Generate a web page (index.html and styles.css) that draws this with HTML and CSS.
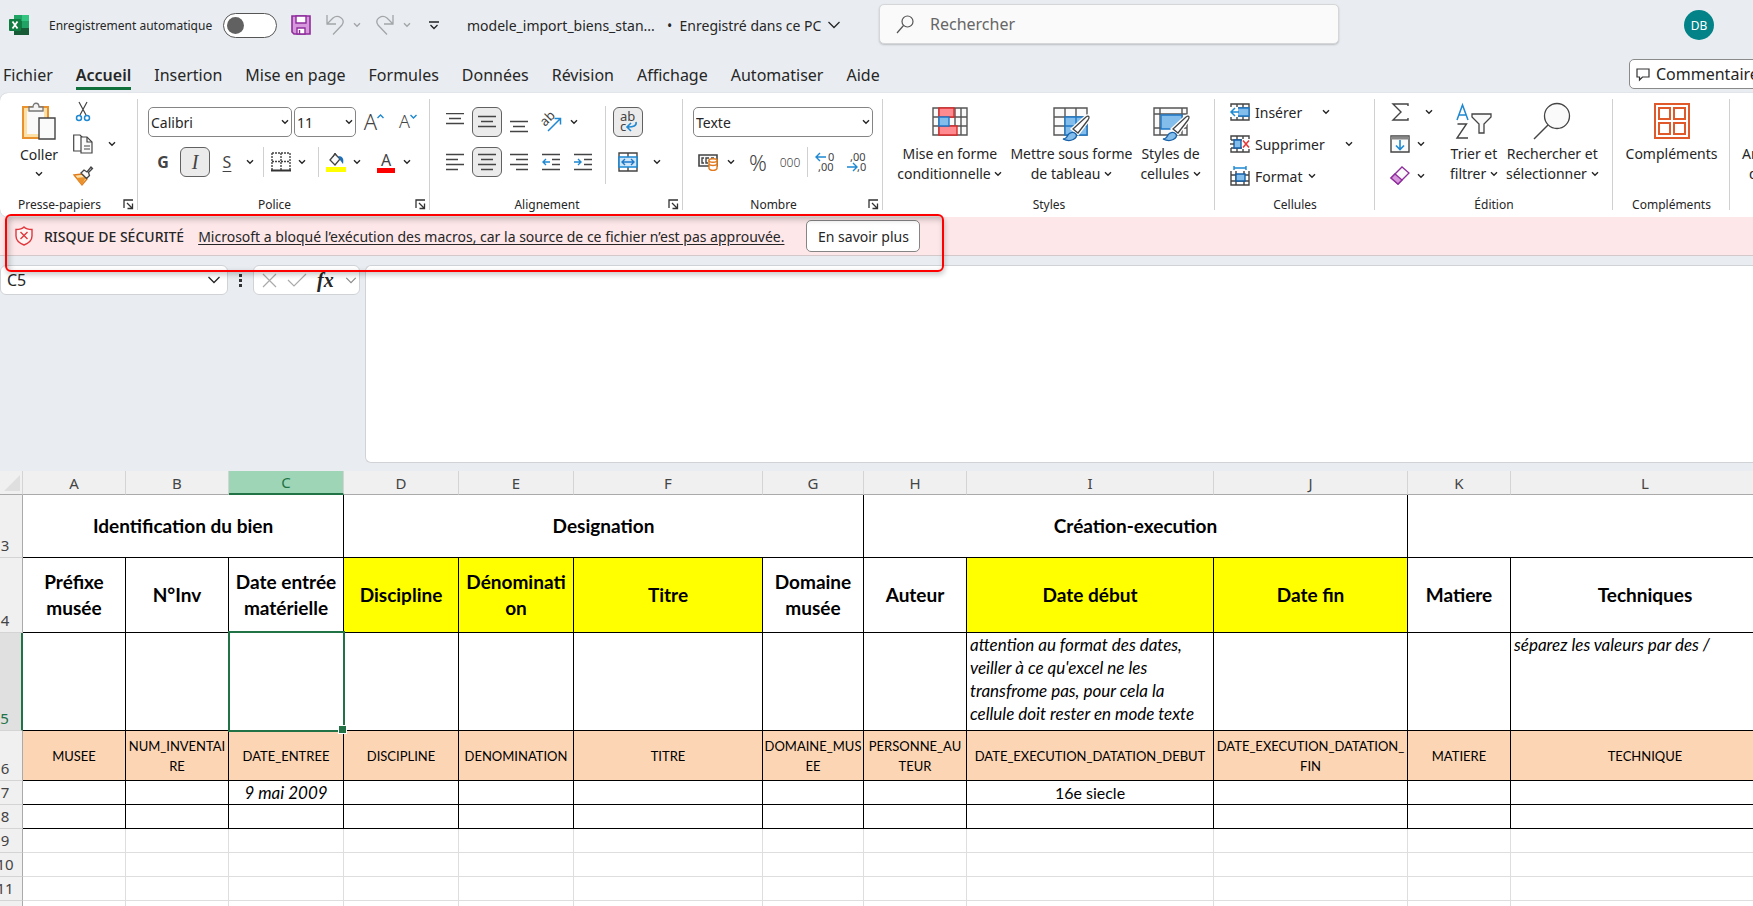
FILE: index.html
```html
<!DOCTYPE html>
<html lang="fr">
<head>
    <meta charset="UTF-8">
    <meta name="viewport" content="width=device-width, initial-scale=1.0">
    <title>modele_import_biens_standard - Excel</title>
    <link rel="stylesheet" href="styles.css">
</head>
<body>
    <svg class="sprite" aria-hidden="true">
        <symbol id="chev" viewBox="0 0 8 6"><path d="M1 1.2l3 3 3-3" fill="none" stroke="currentColor" stroke-width="1.4"/></symbol>
        <symbol id="chev-lg" viewBox="0 0 14 8"><path d="M1.500 1l5.500 5.500L12.500 1" fill="none" stroke="currentColor" stroke-width="1.300"/></symbol>
        <symbol id="launch" viewBox="0 0 11 11"><path d="M1 9V1h9M4 4l5 5M9.500 4.500v5h-5" fill="none" stroke="#333" stroke-width="1.300"/></symbol>
    </svg>

    <!-- Barre de titre -->
    <header class="title-bar">
        <div class="title-left">
            <svg class="logo" width="20" height="20" viewBox="0 0 20 20">
                <path d="M5 0h15v20H5z" fill="#21a366"/><path d="M13 0h7v6h-7z" fill="#33c481"/><path d="M5 6h8v7H5z" fill="#107c41"/><path d="M5 13h15v7H5z" fill="#185c37"/>
                <rect y="4" width="12" height="12" rx="1" fill="#107c41"/><path d="M3.500 6.500l5 7M8.500 6.500l-5 7" stroke="#fff" stroke-width="1.800"/>
            </svg>
            <label class="autosave">Enregistrement automatique <input type="checkbox" class="toggle"></label>
            <button class="qat save" aria-label="Enregistrer">
                <svg width="20" height="20" viewBox="0 0 20 20"><path d="M1 1h18v18H3l-2-2z" fill="#d697dc" stroke="#8f2c9c" stroke-width="1.600"/><path d="M5 1h10v7H5zM6 13h8v6H6z" fill="#fff" stroke="#8f2c9c" stroke-width="1.400"/><path d="M8.500 15v4" stroke="#8f2c9c" stroke-width="1.400"/></svg>
            </button>
            <button class="qat muted" aria-label="Annuler">
                <svg width="20" height="20" viewBox="0 0 20 20"><path d="M2 0v9h9M2 9l6-6c5-4 13 1 9 7l-9 9.500" fill="none" stroke="currentColor" stroke-width="1.300"/></svg>
            </button>
            <button class="qat drop muted" aria-label="Liste annuler"><svg class="chev"><use href="#chev"/></svg></button>
            <button class="qat muted" aria-label="Rétablir">
                <svg width="20" height="20" viewBox="0 0 20 20"><path d="M18 0v9H9M18 9l-6-6C7-1 -1 4 3 10l9 9.500" fill="none" stroke="currentColor" stroke-width="1.300"/></svg>
            </button>
            <button class="qat drop muted" aria-label="Liste rétablir"><svg class="chev"><use href="#chev"/></svg></button>
            <button class="qat custom" aria-label="Personnaliser">
                <svg width="10" height="9" viewBox="0 0 10 9"><path d="M0 1h10M1.500 4L5 7.500 8.500 4" fill="none" stroke="#222" stroke-width="1.300"/></svg>
            </button>
            <span class="doc-name">modele_import_biens_stan...</span>
            <button class="doc-state">• &nbsp;Enregistré dans ce PC <svg width="14" height="8"><use href="#chev-lg"/></svg></button>
        </div>
        <label class="search">
            <svg width="18" height="19" viewBox="0 0 18 19"><circle cx="11.500" cy="6.500" r="5.500" fill="none" stroke="#555" stroke-width="1.200"/><path d="M7.500 10.500L1 18" stroke="#555" stroke-width="1.200"/></svg>
            <input type="text" placeholder="Rechercher" aria-label="Rechercher">
        </label>
        <button class="avatar">DB</button>
    </header>

    <nav class="tabs">
        <a href="#">Fichier</a>
        <a href="#" class="active">Accueil</a>
        <a href="#">Insertion</a>
        <a href="#">Mise en page</a>
        <a href="#">Formules</a>
        <a href="#">Données</a>
        <a href="#">Révision</a>
        <a href="#">Affichage</a>
        <a href="#">Automatiser</a>
        <a href="#">Aide</a>
        <button class="comments">
            <svg width="14" height="13" viewBox="0 0 14 13"><path d="M1 1h12v8H6.500L3.500 12V9H1z" fill="none" stroke="#333" stroke-width="1.200"/></svg>
            Commentaires
        </button>
    </nav>

    <!-- Ruban -->
    <div class="ribbon">
        <section class="group clipboard">
            <div class="group-body">
                <button class="big">
                    <svg width="36" height="39" viewBox="0 0 36 39"><path d="M2 5h25v31H2z" fill="#fce0a6" stroke="#e8912d" stroke-width="2"/><path d="M6 9h17v23H6z" fill="#fafafa"/><path d="M8 9V5h4c0-5 6-5 6 0h4v4z" fill="#f4f4f4" stroke="#777" stroke-width="1.300"/><path d="M18 16h16v21H18z" fill="#fafafa" stroke="#444" stroke-width="1.400"/></svg>
                    <span>Coller</span>
                    <svg class="chev"><use href="#chev"/></svg>
                </button>
                <div class="stack">
                    <button class="row" aria-label="Couper"><svg width="20" height="20" viewBox="0 0 20 20"><path d="M6 0l7 13M14 0L7 13" stroke="#444" stroke-width="1.200"/><circle cx="6" cy="16" r="2.500" fill="none" stroke="#1e88d2" stroke-width="1.500"/><circle cx="14" cy="16" r="2.500" fill="none" stroke="#1e88d2" stroke-width="1.500"/></svg></button>
                    <button class="row" aria-label="Copier"><svg width="20" height="20" viewBox="0 0 20 20"><path d="M8 17H.7V1H7l3 3" fill="none" stroke="#444" stroke-width="1.200"/><path d="M8 3h6l5 5v11H8z" fill="#fafafa" stroke="#444" stroke-width="1.200"/><path d="M14 3v5h5M11 12h6M11 15h6" fill="none" stroke="#444" stroke-width="1.200"/></svg><svg class="chev far"><use href="#chev"/></svg></button>
                    <button class="row" aria-label="Reproduire la mise en forme"><svg width="20" height="20" viewBox="0 0 20 20"><path d="M1 9l8-1 5 5-5 6z" fill="#fce0a6" stroke="#e07a1c" stroke-width="1.300"/><path d="M3 12l10-1-4 8z" fill="#e8912d"/><path d="M8 7l3-3 3 2 4-5 1.500 1.500-4 4 1 3-3 3z" fill="#fafafa" stroke="#444" stroke-width="1.300"/></svg></button>
                </div>
            </div>
            <div class="group-label"><span>Presse-papiers</span><button aria-label="Options presse-papiers"><svg width="11" height="11"><use href="#launch"/></svg></button></div>
        </section>

        <section class="group font">
            <div class="group-body lines">
                <div class="line">
                    <span class="combo font-name"><select aria-label="Police"><option>Calibri</option></select><svg class="chev"><use href="#chev"/></svg></span>
                    <span class="combo font-size"><select aria-label="Taille de police"><option>11</option></select><svg class="chev"><use href="#chev"/></svg></span>
                    <button class="ico grow" aria-label="Augmenter la taille"><span>A</span><svg width="7" height="5" viewBox="0 0 7 5"><path d="M.5 4l3-3 3 3" fill="none" stroke="#1e88d2" stroke-width="1.400"/></svg></button>
                    <button class="ico grow less" aria-label="Diminuer la taille"><span>A</span><svg width="7" height="5" viewBox="0 0 7 5"><path d="M.5 1l3 3 3-3" fill="none" stroke="#1e88d2" stroke-width="1.400"/></svg></button>
                </div>
                <div class="line">
                    <button class="ico"><b>G</b></button>
                    <button class="ico on"><i>I</i></button>
                    <button class="ico"><u>S</u></button>
                    <button class="drop" aria-label="Soulignement"><svg class="chev"><use href="#chev"/></svg></button>
                    <span class="sep"></span>
                    <button class="ico slim" aria-label="Bordures"><svg width="20" height="20" viewBox="0 0 20 20"><path d="M1 1h18v17M1 1v17M10 1v17M1 9.500h18" fill="none" stroke="#444" stroke-width="1.400" stroke-dasharray="2 1"/><path d="M0 18.500h20" stroke="#333" stroke-width="2"/></svg></button>
                    <button class="drop mid" aria-label="Choix des bordures"><svg class="chev"><use href="#chev"/></svg></button>
                    <span class="sep"></span>
                    <button class="ico slim" aria-label="Couleur de remplissage"><svg width="20" height="20" viewBox="0 0 20 20"><path d="M4 8l5-6 5 5-5 6z" fill="#fafafa" stroke="#444" stroke-width="1.300"/><path d="M7 5l2-4 2 3" fill="none" stroke="#444"/><path d="M12 4c5 0 6 3 5 8l-3-4z" fill="#1e6fb8"/><path d="M0 15h20v5H0z" fill="#ff0"/></svg></button>
                    <button class="drop mid" aria-label="Choix du remplissage"><svg class="chev"><use href="#chev"/></svg></button>
                    <button class="ico slim colour" aria-label="Couleur de police"><span>A</span></button>
                    <button class="drop mid" aria-label="Choix de la couleur"><svg class="chev"><use href="#chev"/></svg></button>
                </div>
            </div>
            <div class="group-label"><span>Police</span><button aria-label="Options police"><svg width="11" height="11"><use href="#launch"/></svg></button></div>
        </section>

        <section class="group align">
            <div class="group-body">
                <div class="lines">
                    <div class="line">
                        <button class="ico" aria-label="Aligner en haut"><svg width="18" height="18" viewBox="0 0 18 18"><path d="M0 .7h18M3 5.500h12M0 10.500h18" stroke="#444" stroke-width="1.300"/></svg></button>
                        <button class="ico on" aria-label="Aligner au centre"><svg width="18" height="18" viewBox="0 0 18 18"><path d="M0 3.500h18M3 8.500h12M0 13.500h18" stroke="#444" stroke-width="1.300"/></svg></button>
                        <button class="ico" aria-label="Aligner en bas"><svg width="18" height="18" viewBox="0 0 18 18"><path d="M0 8.500h18M3 13.500h12M0 18.500h18" stroke="#444" stroke-width="1.300"/></svg></button>
                        <button class="ico" aria-label="Orientation"><svg width="20" height="20" viewBox="0 0 20 20"><text x="4" y="15" class="ico-text" transform="rotate(-45 4 15)">ab</text><path d="M7 19L19 7M13.500 6.500h6v6" fill="none" stroke="#1e88d2" stroke-width="1.500"/></svg></button>
                        <button class="drop" aria-label="Choix de l'orientation"><svg class="chev"><use href="#chev"/></svg></button>
                    </div>
                    <div class="line">
                        <button class="ico" aria-label="Aligner à gauche"><svg width="18" height="18" viewBox="0 0 18 18"><path d="M0 1.500h18M0 6.500h12M0 11.500h18M0 16.500h12" stroke="#444" stroke-width="1.300"/></svg></button>
                        <button class="ico on" aria-label="Centrer"><svg width="18" height="18" viewBox="0 0 18 18"><path d="M0 1.500h18M3 6.500h12M0 11.500h18M3 16.500h12" stroke="#444" stroke-width="1.300"/></svg></button>
                        <button class="ico" aria-label="Aligner à droite"><svg width="18" height="18" viewBox="0 0 18 18"><path d="M0 1.500h18M6 6.500h12M0 11.500h18M6 16.500h12" stroke="#444" stroke-width="1.300"/></svg></button>
                        <button class="ico" aria-label="Diminuer le retrait"><svg width="18" height="18" viewBox="0 0 18 18"><path d="M0 1.500h18M10 6.500h8M10 11.500h8M0 16.500h18" stroke="#444" stroke-width="1.300"/><path d="M8 9H1M4 6L1 9l3 3" fill="none" stroke="#1e88d2" stroke-width="1.400"/></svg></button>
                        <button class="ico" aria-label="Augmenter le retrait"><svg width="18" height="18" viewBox="0 0 18 18"><path d="M0 1.500h18M10 6.500h8M10 11.500h8M0 16.500h18" stroke="#444" stroke-width="1.300"/><path d="M0 9h7M4 6l3 3-3 3" fill="none" stroke="#1e88d2" stroke-width="1.400"/></svg></button>
                    </div>
                </div>
                <span class="sep tall"></span>
                <div class="lines">
                    <div class="line">
                        <button class="ico on" aria-label="Renvoyer à la ligne"><svg width="20" height="22" viewBox="0 0 20 22"><text x="2" y="10" class="ico-text">ab</text><text x="2" y="20" class="ico-text">c</text><path d="M18 11c1 4-3 5-8 5M13 12l-4 4 4 4" fill="none" stroke="#1e88d2" stroke-width="1.600"/></svg></button>
                    </div>
                    <div class="line">
                        <button class="ico" aria-label="Fusionner et centrer"><svg width="20" height="20" viewBox="0 0 20 20"><path d="M1 1h18v18H1zM10 1v4M10 15v4" fill="none" stroke="#444" stroke-width="1.400"/><path d="M1 5h18v10H1z" fill="#cfe6f8" stroke="#1e88d2" stroke-width="1.600"/><path d="M4 10h12M7 7l-3 3 3 3M13 7l3 3-3 3" fill="none" stroke="#1e78c8" stroke-width="1.400"/></svg></button>
                        <button class="drop wide" aria-label="Choix de fusion"><svg class="chev"><use href="#chev"/></svg></button>
                    </div>
                </div>
            </div>
            <div class="group-label"><span>Alignement</span><button aria-label="Options alignement"><svg width="11" height="11"><use href="#launch"/></svg></button></div>
        </section>

        <section class="group number">
            <div class="group-body lines">
                <div class="line">
                    <span class="combo format"><select aria-label="Format de nombre"><option>Texte</option></select><svg class="chev"><use href="#chev"/></svg></span>
                </div>
                <div class="line">
                    <button class="ico" aria-label="Format comptabilité"><svg width="20" height="18" viewBox="0 0 20 18"><path d="M1 2h18v11H1z" fill="#fafafa" stroke="#444" stroke-width="1.600"/><path d="M6 5H4v5h2M11 5H8v5h2M16 5h-3" fill="none" stroke="#444" stroke-width="1.400"/><path d="M11 7.500v8c1 2.500 7 2.500 8 0v-8z" fill="#fff" stroke="#e07a1c" stroke-width="1.400"/><ellipse cx="15" cy="7.500" rx="4" ry="1.700" fill="#fff" stroke="#e07a1c" stroke-width="1.400"/><path d="M11 11c1 2 7 2 8 0" fill="none" stroke="#e07a1c" stroke-width="1.400"/></svg></button>
                    <button class="drop" aria-label="Choix comptabilité"><svg class="chev"><use href="#chev"/></svg></button>
                    <button class="ico percent">%</button>
                    <button class="ico zeros">000</button>
                    <span class="sep tight"></span>
                    <button class="ico" aria-label="Ajouter une décimale"><svg width="20" height="20" viewBox="0 0 20 20"><text x="13" y="9" class="ico-num">0</text><text x="3" y="19" class="ico-num">,00</text><path d="M11 5H1M5 1L1 5l4 4" fill="none" stroke="#1e88d2" stroke-width="1.400"/></svg></button>
                    <button class="ico" aria-label="Réduire les décimales"><svg width="20" height="20" viewBox="0 0 20 20"><text x="3" y="9" class="ico-num">,00</text><text x="10" y="19" class="ico-num">,0</text><path d="M0 15h10M6 11l4 4-4 4" fill="none" stroke="#1e88d2" stroke-width="1.400"/></svg></button>
                </div>
            </div>
            <div class="group-label"><span>Nombre</span><button aria-label="Options nombre"><svg width="11" height="11"><use href="#launch"/></svg></button></div>
        </section>

        <section class="group styles">
            <div class="group-body">
                <button class="big">
                    <svg width="38" height="38" viewBox="0 0 38 38"><path d="M2 6h34v27H2zM2 15h34M2 24h34M8 6v27M24 6v27M30 6v27" fill="#fafafa" stroke="#555" stroke-width="1.400"/><path d="M8 6h15v9H8zM8 24h18v9H8z" fill="#ff8b90" stroke="#d92b2b" stroke-width="1.400"/><path d="M8 15h10v9H8z" fill="#83bdec" stroke="#1e78c8" stroke-width="1.400"/></svg>
                    <span>Mise en forme<br>conditionnelle <svg class="chev"><use href="#chev"/></svg></span>
                </button>
                <button class="big">
                    <svg width="38" height="38" viewBox="0 0 38 38"><path d="M2 6h33v27H2zM2 15h33M2 24h33M13 6v27M24 6v27" fill="#fafafa" stroke="#555" stroke-width="1.400"/><path d="M13 15h22v18H13zM13 24h22M24 15v18" fill="#83bdec" stroke="#1e78c8" stroke-width="1.400"/><path d="M21 27L34 15c3-2 4 0 2 3L26 31z" fill="#fff" stroke="#fff" stroke-width="4"/><path d="M21 27L34 15c3-2 4 0 2 3L26 31z" fill="#fff" stroke="#444" stroke-width="1.300"/><path d="M11 37c3 0 4-2 5-4s5-4 8-1c2 4-5 9-13 5z" fill="#83bdec" stroke="#1560a8" stroke-width="1.300"/></svg>
                    <span>Mettre sous forme<br>de tableau <svg class="chev"><use href="#chev"/></svg></span>
                </button>
                <button class="big">
                    <svg width="38" height="38" viewBox="0 0 38 38"><path d="M2 6h33v27H2zM2 12h33M2 26h33M8 6v27M30 6v27" fill="#fafafa" stroke="#555" stroke-width="1.400"/><path d="M9 13h21v14H9z" fill="#83bdec" stroke="#1e78c8" stroke-width="1.400"/><path d="M21 27L34 15c3-2 4 0 2 3L26 31z" fill="#fff" stroke="#fff" stroke-width="4"/><path d="M21 27L34 15c3-2 4 0 2 3L26 31z" fill="#fff" stroke="#444" stroke-width="1.300"/><path d="M11 37c3 0 4-2 5-4s5-4 8-1c2 4-5 9-13 5z" fill="#83bdec" stroke="#1560a8" stroke-width="1.300"/></svg>
                    <span>Styles de<br>cellules <svg class="chev"><use href="#chev"/></svg></span>
                </button>
            </div>
            <div class="group-label"><span>Styles</span></div>
        </section>

        <section class="group cells">
            <div class="group-body">
                <div class="stack">
                    <button class="row"><svg width="20" height="18" viewBox="0 0 20 18"><path d="M1 1h18v16H1zM1 5h18M1 13h18M7 1v16M13 1v16" fill="#fafafa" stroke="#444" stroke-width="1.400"/><path d="M7 5h12v8H7z" fill="#83bdec" stroke="#1e78c8" stroke-width="1.400"/><path d="M0 4h8v10H0z" fill="#fff"/><path d="M9 9H1M5 5L1 9l4 4" fill="none" stroke="#1e88d2" stroke-width="1.500"/></svg>Insérer<svg class="chev far"><use href="#chev"/></svg></button>
                    <button class="row"><svg width="20" height="18" viewBox="0 0 20 18"><path d="M1 5V1h18v4M1 13v4h18v-4M1 5h18M1 13h18M7 1v4M13 1v4M7 13v4M13 13v4" fill="none" stroke="#444" stroke-width="1.400"/><path d="M4 5h7v8H4z" fill="#83bdec" stroke="#1560a8" stroke-width="1.400"/><path d="M0 9h4" stroke="#444" stroke-width="1.400"/><path d="M12 4h8v10h-8z" fill="#fff"/><path d="M13 5.500l6 7M19 5.500l-6 7" stroke="#e23b3b" stroke-width="1.600"/></svg>Supprimer<svg class="chev far"><use href="#chev"/></svg></button>
                    <button class="row"><svg width="20" height="20" viewBox="0 0 20 20"><path d="M1 5v14h18V5M1 9h18M1 15h18M6 5v14M14 5v14" fill="none" stroke="#444" stroke-width="1.400"/><path d="M6 8h9v7H6z" fill="#83bdec" stroke="#1560a8" stroke-width="1.400"/><path d="M4 2h12M4 0v4M16 0v4" stroke="#1e88d2" stroke-width="1.400"/></svg>Format<svg class="chev"><use href="#chev"/></svg></button>
                </div>
            </div>
            <div class="group-label"><span>Cellules</span></div>
        </section>

        <section class="group edit">
            <div class="group-body">
                <div class="stack">
                    <button class="row" aria-label="Somme automatique"><svg width="20" height="20" viewBox="0 0 20 20"><path d="M18 4V2H3l8 8-8 8h15v-2" fill="none" stroke="#444" stroke-width="1.400"/></svg><svg class="chev far"><use href="#chev"/></svg></button>
                    <button class="row" aria-label="Remplissage"><svg width="20" height="18" viewBox="0 0 20 18"><path d="M1 1h18v16H1z" fill="#fafafa" stroke="#444" stroke-width="1.400"/><path d="M1 3h18" stroke="#888" stroke-width="3"/><path d="M10 5v9M6 10.500l4 4 4-4" fill="none" stroke="#1e88d2" stroke-width="1.600"/></svg><svg class="chev"><use href="#chev"/></svg></button>
                    <button class="row" aria-label="Effacer"><svg width="20" height="20" viewBox="0 0 20 20"><path d="M1 12L12 1l7 6L8 18z" fill="#fafafa" stroke="#8f2c9c" stroke-width="1.300"/><path d="M1 12l4-4 7 6-4 4z" fill="#d697dc" stroke="#8f2c9c" stroke-width="1.300"/></svg><svg class="chev"><use href="#chev"/></svg></button>
                </div>
                <button class="big">
                    <svg width="38" height="38" viewBox="0 0 38 38"><path d="M2 18L7.500 3 13 18M4 13h7" fill="none" stroke="#1e88d2" stroke-width="1.500"/><path d="M2.500 22h9L2 36h11" fill="none" stroke="#444" stroke-width="1.400"/><path d="M17 12h19v3l-7 7v9h-5v-9l-7-7z" fill="#fafafa" stroke="#444" stroke-width="1.300"/></svg>
                    <span>Trier et<br>filtrer <svg class="chev"><use href="#chev"/></svg></span>
                </button>
                <button class="big">
                    <svg width="38" height="38" viewBox="0 0 38 38"><circle cx="24" cy="14" r="12.500" fill="#fafafa" stroke="#444" stroke-width="1.300"/><path d="M15 23L1 37" stroke="#444" stroke-width="1.400"/></svg>
                    <span>Rechercher et<br>sélectionner <svg class="chev"><use href="#chev"/></svg></span>
                </button>
            </div>
            <div class="group-label"><span>Édition</span></div>
        </section>

        <section class="group addins">
            <div class="group-body">
                <button class="big">
                    <svg width="38" height="38" viewBox="0 0 38 38"><path d="M2 2h34v34H2zM6 6h11v11H6zM21 6h11v11H21zM6 21h11v11H6zM21 21h11v11H21z" fill="none" stroke="#e0592a" stroke-width="2"/></svg>
                    <span>Compléments</span>
                </button>
            </div>
            <div class="group-label"><span>Compléments</span></div>
        </section>

        <section class="group analyse">
            <div class="group-body">
                <button class="big"><svg width="38" height="38"></svg><span>Analyse de<br>données</span></button>
            </div>
        </section>
    </div>

    <!-- Bandeau de sécurité -->
    <div class="message-bar">
        <svg width="18" height="20" viewBox="0 0 18 20"><path d="M9 1c2 2 5 2.500 8 2.500V10c0 4-3 7-8 9-5-2-8-5-8-9V3.500C4 3.500 7 3 9 1z" fill="#fff4f4" stroke="#e2363c" stroke-width="1.400"/><path d="M5.500 6l7 7M12.500 6l-7 7" stroke="#e2363c" stroke-width="1.400"/></svg>
        <strong>RISQUE DE SÉCURITÉ</strong>
        <a href="#">Microsoft a bloqué l’exécution des macros, car la source de ce fichier n’est pas approuvée.</a>
        <button>En savoir plus</button>
        <div class="highlight"></div>
    </div>

    <div class="formula-bar">
        <label class="name-box"><input type="text" value="C5" aria-label="Zone Nom"><svg width="14" height="8"><use href="#chev-lg"/></svg></label>
        <svg class="dots" width="3" height="13" viewBox="0 0 3 13"><path d="M0 0h3v3H0zM0 5h3v3H0zM0 10h3v3H0z" fill="#333"/></svg>
        <div class="fx-box">
            <button aria-label="Annuler la saisie"><svg width="15" height="15" viewBox="0 0 15 15"><path d="M1 1l13 13M14 1L1 14" stroke="#aaa" stroke-width="1.200"/></svg></button>
            <button aria-label="Entrer"><svg width="20" height="14" viewBox="0 0 20 14"><path d="M1 7l6 6L19 1" fill="none" stroke="#aaa" stroke-width="1.200"/></svg></button>
            <button class="fx">fx</button>
            <button aria-label="Liste des fonctions"><svg width="12" height="7"><use href="#chev-lg"/></svg></button>
        </div>
        <textarea class="formula" aria-label="Barre de formule"></textarea>
    </div>

    <!-- Feuille -->
    <div class="sheet">
        <table>
            <colgroup>
                <col class="w-head"><col class="w-a"><col class="w-a"><col class="w-c"><col class="w-c"><col class="w-c"><col class="w-f"><col class="w-g"><col class="w-a"><col class="w-i"><col class="w-j"><col class="w-a"><col class="w-l">
            </colgroup>
            <thead>
                <tr>
                    <th class="corner"><svg width="16" height="16" viewBox="0 0 16 16"><path d="M16 0v16H0z" fill="#dfdfdf"/></svg></th>
                    <th>A</th><th>B</th><th class="current">C</th><th>D</th><th>E</th><th>F</th><th>G</th><th>H</th><th>I</th><th>J</th><th>K</th><th>L</th>
                </tr>
            </thead>
            <tbody class="framed">
                <tr class="sections">
                    <th>3</th>
                    <td colspan="3">Identification du bien</td><td colspan="4">Designation</td><td colspan="3">Création-execution</td><td colspan="2"></td>
                </tr>
                <tr class="fields">
                    <th>4</th>
                    <td>Préfixe<br>musée</td><td>N°Inv</td><td>Date entrée<br>matérielle</td><td class="key">Discipline</td><td class="key">Dénominati<br>on</td><td class="key">Titre</td><td>Domaine<br>musée</td><td>Auteur</td><td class="key">Date début</td><td class="key">Date fin</td><td>Matiere</td><td>Techniques</td>
                </tr>
                <tr class="notes">
                    <th class="current">5</th>
                    <td></td><td></td><td class="selected"><div class="selection"></div></td><td></td><td></td><td></td><td></td><td></td>
                    <td>attention au format des dates,<br>veiller à ce qu'excel ne les<br>transfrome pas, pour cela la<br>cellule doit rester en mode texte</td>
                    <td></td><td></td><td>séparez les valeurs par des /</td>
                </tr>
                <tr class="codes">
                    <th>6</th>
                    <td>MUSEE</td><td>NUM_INVENTAI<br>RE</td><td>DATE_ENTREE</td><td>DISCIPLINE</td><td>DENOMINATION</td><td>TITRE</td><td>DOMAINE_MUS<br>EE</td><td>PERSONNE_AU<br>TEUR</td><td>DATE_EXECUTION_DATATION_DEBUT</td><td>DATE_EXECUTION_DATATION_<br>FIN</td><td>MATIERE</td><td>TECHNIQUE</td>
                </tr>
                <tr>
                    <th>7</th>
                    <td></td><td></td><td><i>9 mai 2009</i></td><td></td><td></td><td></td><td></td><td></td><td>16e siecle</td><td></td><td></td><td></td>
                </tr>
                <tr>
                    <th>8</th>
                    <td></td><td></td><td></td><td></td><td></td><td></td><td></td><td></td><td></td><td></td><td></td><td></td>
                </tr>
            </tbody>
            <tbody>
                <tr><th>9</th><td></td><td></td><td></td><td></td><td></td><td></td><td></td><td></td><td></td><td></td><td></td><td></td></tr>
                <tr><th>10</th><td></td><td></td><td></td><td></td><td></td><td></td><td></td><td></td><td></td><td></td><td></td><td></td></tr>
                <tr><th>11</th><td></td><td></td><td></td><td></td><td></td><td></td><td></td><td></td><td></td><td></td><td></td><td></td></tr>
                <tr><th></th><td></td><td></td><td></td><td></td><td></td><td></td><td></td><td></td><td></td><td></td><td></td><td></td></tr>
            </tbody>
        </table>
    </div>
</body>
</html>
```
FILE: styles.css
```css
* {
    box-sizing: border-box;
}
body {
    margin: 0;
    height: 100vh;
    overflow: hidden;
    display: flex;
    flex-direction: column;
    background: #e9edf1;
    color: #262626;
    font-family: "Noto Sans", "Open Sans", sans-serif;
    font-size: 14px;
}
button, input, select, textarea {
    font: inherit;
    color: inherit;
}
button {
    display: flex;
    align-items: center;
    justify-content: center;
    flex: none;
    padding: 0;
    border: 0;
    background: none;
}
svg {
    flex: none;
    overflow: visible;
}
.sprite {
    position: absolute;
    width: 0;
    height: 0;
}
.chev {
    width: 8px;
    height: 6px;
}

/* Barre de titre */
.title-bar {
    display: flex;
    align-items: center;
    flex: none;
    height: 50px;
    padding-right: 39px;
}
.title-left {
    display: flex;
    align-items: center;
    width: 879px;
    flex: none;
    padding-left: 9px;
    white-space: nowrap;
}
.autosave {
    display: flex;
    align-items: center;
    justify-content: space-between;
    width: 228px;
    margin-left: 20px;
    font-size: 12px;
}
.toggle {
    appearance: none;
    width: 54px;
    height: 25px;
    margin: 0;
    padding: 3px;
    border: 1px solid #555;
    border-radius: 13px;
    background: #fff;
}
.toggle::before {
    content: "";
    display: block;
    width: 17px;
    height: 17px;
    border-radius: 50%;
    background: #616161;
}
.qat {
    width: 20px;
    margin-left: 14px;
}
.qat.drop {
    width: 8px;
    margin-left: 8px;
}
.muted {
    color: #a3a5a8;
}
.qat.custom {
    width: 10px;
    margin-left: 18px;
}
.doc-name {
    margin-left: 28px;
    width: 200px;
}
.doc-state {
    gap: 6px;
}
.search {
    display: flex;
    align-items: center;
    gap: 16px;
    width: 460px;
    height: 40px;
    margin-top: -2px;
    padding: 0 16px;
    background: #fafafa;
    border: 1px solid #d4d6d8;
    border-radius: 5px;
    box-shadow: 0 1px 2px rgba(0, 0, 0, 0.2);
}
.search input {
    flex: 1;
    padding: 0;
    border: 0;
    background: none;
    font-size: 16px;
}
.search input::placeholder {
    color: #666;
}
.avatar {
    width: 30px;
    height: 30px;
    margin-left: auto;
    border-radius: 50%;
    background: #038387;
    color: #fff;
    font-size: 12px;
}

/* Onglets */
.tabs {
    display: flex;
    align-items: flex-end;
    flex: none;
    gap: 23px;
    height: 43px;
    padding: 0 0 3px 3px;
    font-size: 16px;
}
.tabs a {
    height: 30px;
    line-height: 30px;
    color: inherit;
    text-decoration: none;
    white-space: nowrap;
}
.tabs .active {
    font-weight: 600;
    border-bottom: 3px solid #0f703b;
}
.comments {
    gap: 6px;
    width: 150px;
    height: 30px;
    margin: 0 -26px 1px auto;
    padding-left: 6px;
    justify-content: flex-start;
    background: #fff;
    border: 1px solid #8a8a8a;
    border-radius: 5px;
}

/* Ruban */
.ribbon {
    display: flex;
    flex: none;
    height: 124px;
    background: #fff;
    border-radius: 8px 0 0 8px;
    box-shadow: 0 0 1px rgba(0, 0, 0, 0.3);
}
.group {
    display: flex;
    flex-direction: column;
    flex: none;
    position: relative;
}
.group::after {
    content: "";
    position: absolute;
    top: 6px;
    right: 0;
    width: 1px;
    height: 111px;
    background: #d0d0d0;
}
.clipboard { width: 138px; }
.font { width: 292px; }
.align { width: 253px; }
.number { width: 200px; }
.styles { width: 332px; }
.cells { width: 160px; }
.edit { width: 238px; }
.addins { width: 117px; }
.analyse { width: 100px; }
.group-body {
    display: flex;
    height: 100px;
    padding-left: 10px;
}
.group-label {
    display: flex;
    align-items: center;
    height: 22px;
    font-size: 12px;
}
.group-label span {
    flex: 1;
    text-align: center;
}
.group-label button {
    width: 19px;
}
.big {
    flex-direction: column;
    justify-content: flex-start;
    padding-top: 9px;
    line-height: 20px;
    white-space: nowrap;
}
.big > span {
    margin-top: 4px;
}
.big > .chev {
    margin-top: 6px;
}
.big span .chev {
    margin-bottom: 2px;
}
.clipboard .big {
    width: 58px;
    margin-right: 5px;
}
.stack {
    padding-top: 3px;
}
.row {
    height: 32px;
    gap: 5px;
    white-space: nowrap;
}
.clipboard .row {
    gap: 15px;
}
.lines {
    display: flex;
    flex-direction: column;
    gap: 10px;
    padding-top: 14px;
}
.line {
    display: flex;
    align-items: center;
    gap: 2px;
    height: 30px;
}
.ico {
    width: 30px;
    height: 30px;
    border: 1px solid transparent;
    border-radius: 6px;
    color: #444;
    font-size: 16px;
}
.ico.on {
    background: #ebebeb;
    border-color: #616161;
}
.ico.slim {
    width: 20px;
}
.ico i {
    font-family: "Liberation Serif", serif;
    font-size: 20px;
}
.ico u {
    text-underline-offset: 3px;
}
.drop {
    width: 12px;
    height: 30px;
}
.drop.mid {
    width: 18px;
}
.drop.wide {
    width: 24px;
}
.sep {
    width: 1px;
    height: 30px;
    margin: 0 5px;
    background: #d0d0d0;
}
.sep.tight {
    margin: 0;
}
.sep.tall {
    height: 78px;
    margin: 13px 7px 0 7px;
}
.combo {
    display: flex;
    align-items: center;
    position: relative;
    height: 30px;
}
.combo select {
    appearance: none;
    width: 100%;
    height: 30px;
    padding: 0 2px;
    border: 1px solid #858585;
    border-radius: 5px;
    background: #fff;
}
.combo .chev {
    position: absolute;
    right: 3px;
}
.font-name { width: 144px; }
.font-size { width: 62px; }
.format { width: 180px; }
.grow {
    align-items: flex-start;
    width: 32px;
    font-size: 22px;
    font-weight: 300;
    line-height: 26px;
}
.grow svg {
    margin-top: 6px;
}
.less {
    font-size: 18px;
}
.colour {
    margin-left: 8px;
}
.colour span {
    width: 20px;
    line-height: 16px;
    border-bottom: 5px solid #f00;
}
.percent {
    margin-left: 4px;
    font-size: 22px;
    font-weight: 300;
}
.zeros {
    font-size: 12px;
    font-weight: 300;
}
.ico-text {
    font-size: 13px;
    fill: #444;
}
.ico-num {
    font-size: 11px;
    fill: #444;
}
.styles .group-body {
    justify-content: center;
    gap: 8px;
    padding: 0;
}
.cells .group-body {
    padding-left: 15px;
}
.cells .far {
    margin-left: 15px;
}
.edit .group-body {
    gap: 8px;
    padding-left: 15px;
}
.edit .row {
    gap: 7px;
}
.edit .stack {
    width: 52px;
}
.edit .far {
    margin-left: 8px;
}
.addins .group-body {
    justify-content: center;
    padding: 0;
}
.analyse .group-body {
    padding-left: 12px;
}

/* Bandeau de sécurité */
.message-bar {
    display: flex;
    align-items: center;
    flex: none;
    position: relative;
    height: 39px;
    padding-left: 15px;
    background: #fde7e9;
    border-bottom: 1px solid #d5c8cb;
    white-space: nowrap;
}
.message-bar strong {
    margin: 0 14px 0 11px;
    font-weight: 500;
}
.message-bar a {
    color: inherit;
    text-underline-offset: 2px;
}
.message-bar button {
    width: 114px;
    height: 32px;
    margin-left: 22px;
    background: #fff;
    border: 1px solid #858585;
    border-radius: 5px;
}
/* Cadre rouge d'annotation, par-dessus le bandeau et la barre de formule */
.highlight {
    position: absolute;
    left: 5px;
    top: -3px;
    width: 939px;
    height: 58px;
    border: 2px solid #f00;
    border-radius: 6px;
    box-shadow: 1px 3px 5px rgba(0, 0, 0, 0.2), inset 2px 3px 6px rgba(0, 0, 0, 0.25);
    pointer-events: none;
}

/* Barre de formule */
.formula-bar {
    display: flex;
    align-items: flex-start;
    flex: none;
    padding: 9px 0 8px;
}
.name-box {
    display: flex;
    align-items: center;
    width: 228px;
    height: 30px;
    padding: 0 6px 0 4px;
    background: #fff;
    border: 1px solid #d0d3d6;
    border-radius: 6px;
}
.name-box input {
    flex: 1;
    width: 100%;
    border: 0;
    background: none;
    font-size: 16px;
}
.dots {
    margin: 9px 11px 0 11px;
}
.fx-box {
    display: flex;
    align-items: center;
    gap: 10px;
    width: 107px;
    height: 30px;
    padding: 0 2px 0 8px;
    background: #fff;
    border: 1px solid #d0d3d6;
    border-radius: 6px;
}
.fx {
    font-family: "Liberation Serif", serif;
    font-style: italic;
    font-weight: bold;
    font-size: 20px;
}
.fx-box button:last-child {
    margin-left: auto;
    color: #888;
}
.formula {
    flex: 1;
    height: 198px;
    margin-left: 5px;
    border: 1px solid #d0d3d6;
    border-right: 0;
    border-radius: 6px 0 0 6px;
    background: #fff;
    resize: none;
}

/* Feuille */
.sheet {
    flex: 1;
    overflow: hidden;
    background: #fff;
    font-family: Lato, "Liberation Sans", sans-serif;
    color: #000;
}
table {
    table-layout: fixed;
    width: 1792px;
    margin-left: -12px;
    border-collapse: separate;
    border-spacing: 0;
}
.w-head { width: 35px; }
.w-a { width: 103px; }
.w-c { width: 115px; }
.w-f { width: 189px; }
.w-g { width: 101px; }
.w-i { width: 247px; }
.w-j { width: 194px; }
.w-l { width: 269px; }
tr {
    height: 24px;
}
th {
    padding: 0;
    background: #f0f0f0;
    color: #444;
    font-family: "Noto Sans", "Open Sans", sans-serif;
    font-size: 15px;
    font-weight: normal;
    line-height: 20px;
    border-right: 1px solid #d4d4d4;
    border-bottom: 1px solid #aaa;
}
tbody th {
    padding-bottom: 2px;
    vertical-align: bottom;
    border-right-color: #aaa;
    border-bottom-color: #d4d4d4;
}
.corner svg {
    display: block;
    margin-left: 16px;
}
thead .current {
    background: #9fd5b7;
    color: #217346;
    border-bottom: 2px solid #217346;
}
tbody .current {
    background: #e0e0e0;
    color: #217346;
    border-right: 2px solid #217346;
}
td {
    padding: 0;
    text-align: center;
    font-size: 16px;
    line-height: 20px;
    white-space: nowrap;
    border-right: 1px solid #dedede;
    border-bottom: 1px solid #dedede;
}
td i {
    font-size: 17px;
}
.framed td {
    border-color: #000;
}
.sections {
    height: 63px;
}
.fields {
    height: 75px;
}
.sections td, .fields td {
    font-size: 19px;
    font-weight: bold;
    line-height: 26px;
}
.fields .key {
    background: #ff0;
}
.notes {
    height: 98px;
}
.notes td {
    padding-left: 3px;
    text-align: left;
    vertical-align: top;
    font-size: 17px;
    font-style: italic;
    line-height: 23px;
}
.codes {
    height: 50px;
}
.codes td {
    background: #fcd5b4;
    font-size: 13px;
}
.selected {
    position: relative;
}
.selection {
    position: absolute;
    top: -2px;
    right: -2px;
    bottom: -2px;
    left: -1px;
    border: 2px solid #217346;
}
.selection::after {
    content: "";
    position: absolute;
    right: -4px;
    bottom: -4px;
    width: 7px;
    height: 7px;
    background: #217346;
    border: 1px solid #fff;
}
```
